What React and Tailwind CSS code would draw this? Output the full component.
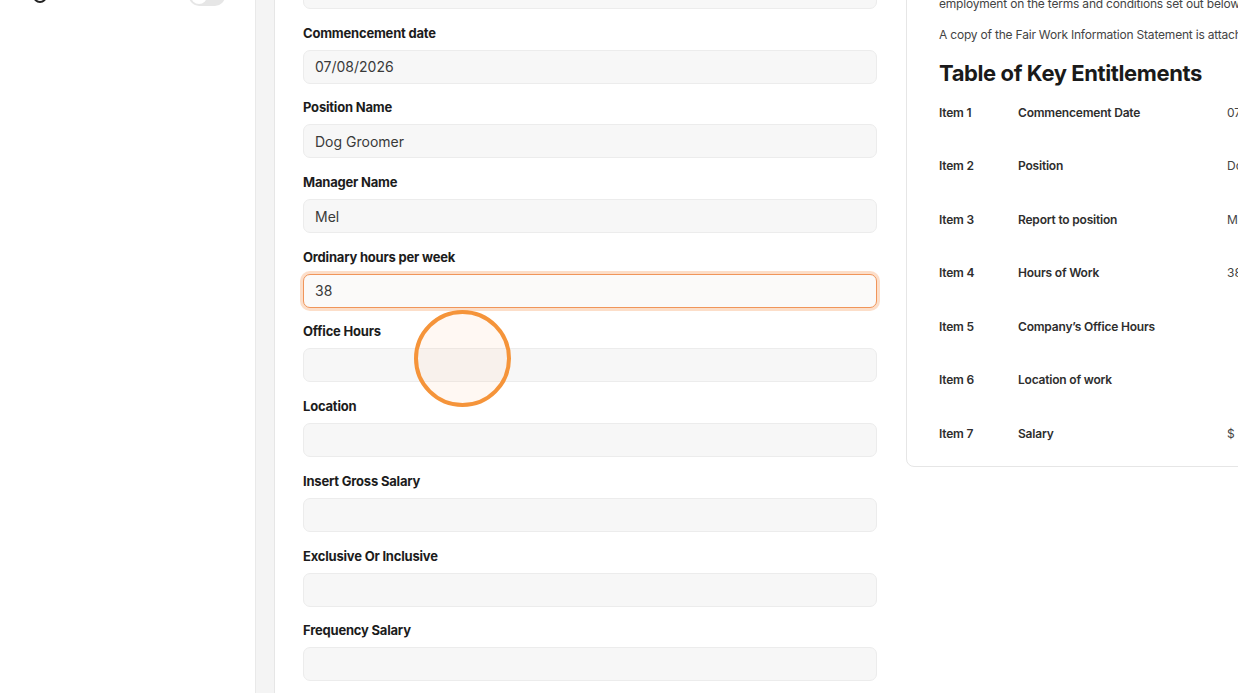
import React from 'react';

const fields = [
    { label: 'Employee Name', value: '' },
    { label: 'Commencement date', value: '07/08/2026' },
    { label: 'Position Name', value: 'Dog Groomer' },
    { label: 'Manager Name', value: 'Mel' },
    { label: 'Ordinary hours per week', value: '38', focused: true },
    { label: 'Office Hours', value: '' },
    { label: 'Location', value: '' },
    { label: 'Insert Gross Salary', value: '' },
    { label: 'Exclusive Or Inclusive', value: '' },
    { label: 'Frequency Salary', value: '' },
];

const entitlements = [
    { item: 'Item 1', name: 'Commencement Date', value: '07/08/2026' },
    { item: 'Item 2', name: 'Position', value: 'Dog Groomer' },
    { item: 'Item 3', name: 'Report to position', value: 'Mel' },
    { item: 'Item 4', name: 'Hours of Work', value: '38 hours' },
    { item: 'Item 5', name: 'Company’s Office Hours', value: '' },
    { item: 'Item 6', name: 'Location of work', value: '' },
    { item: 'Item 7', name: 'Salary', value: '$ 0.00' },
];

const Field = ({ label, value, focused }) => (
    <div>
        <label className="block text-[13px] leading-[17px] font-bold text-[#1c1c1c] tracking-[-0.2px] mb-[8px]">{label}</label>
        <input
            readOnly
            value={value}
            className={`w-full h-[34px] rounded-[7px] px-[11px] text-[14px] text-[#3a3a3a] outline-none ${focused ? 'bg-[#fbfaf9] border border-[#f0955a] shadow-[0_0_0_3px_rgba(247,160,100,0.35)]' : 'bg-[#f7f7f7] border border-[#ececec]'}`}
        />
    </div>
);

const App = () => {
    return (
        <div className="relative h-[693px] w-[1238px] overflow-hidden bg-white flex" style={{ fontFamily: 'Inter, "Noto Sans", sans-serif' }}>
            {/* sidebar, scrolled to its last setting */}
            <aside className="w-[256px] shrink-0 border-r border-[#e9e9e9] bg-white">
                <div className="-mt-[14px] flex items-center pl-[33px] pr-[30px] h-[20px]">
                    <span className="h-[14px] w-[14px] rounded-full border-2 border-[#222]" />
                    <span className="ml-[11px] text-[12px] text-[#e8e3d0]">Notifications</span>
                    <span className="ml-auto h-[20px] w-[36px] rounded-full bg-[#e6e6e6] p-[2px] flex">
                        <span className="h-[16px] w-[16px] rounded-full bg-white" />
                    </span>
                </div>
            </aside>

            <div className="w-[18px] shrink-0 bg-[#f4f4f4]" />

            <main className="flex-1 border-l border-[#e6e6e6] flex">
                <section className="w-[630px] shrink-0 pl-[28px] pr-[28px] -mt-[50px] flex flex-col gap-[15.7px]">
                    {fields.map((f) => (
                        <Field key={f.label} {...f} />
                    ))}
                </section>

                <section className="w-[420px] shrink-0 self-start -mt-[60px] ml-px border border-[#e6e6e6] rounded-lg pl-[32px] pr-[20px] pt-[10px] pb-[5px]">
                    <p className="text-[12px] leading-[18px] text-[#444] tracking-[-0.2px] whitespace-nowrap">
                        Pay Dogs Pty Ltd is pleased to offer you
                    </p>
                    <p className="text-[12px] leading-[18px] text-[#444] tracking-[-0.2px] whitespace-nowrap mt-[26px]">
                        employment on the terms and conditions set out below.
                    </p>
                    <p className="text-[12px] leading-[18px] text-[#444] tracking-[-0.2px] whitespace-nowrap mt-[13px]">
                        A copy of the Fair Work Information Statement is attached.
                    </p>
                    <h2 className="mt-[14px] text-[22px] leading-[30px] font-bold text-[#1a1a1a] tracking-[-0.4px]">Table of Key Entitlements</h2>
                    <div className="mt-[-2px]">
                        {entitlements.map((row) => (
                            <div key={row.item} className="flex items-center h-[53.5px] text-[12px] whitespace-nowrap">
                                <span className="w-[79px] shrink-0 font-semibold text-[#2e2e2e] tracking-[-0.2px]">{row.item}</span>
                                <span className="w-[209px] shrink-0 font-semibold text-[#2e2e2e] tracking-[-0.2px]">{row.name}</span>
                                <span className="text-[#444]">{row.value}</span>
                            </div>
                        ))}
                    </div>
                </section>
            </main>

            {/* click marker */}
            <div className="absolute left-[414px] top-[310px] h-[97px] w-[97px] rounded-full border-[4px] border-[#f5943a] bg-[rgba(255,200,160,0.12)] pointer-events-none" />
        </div>
    );
};

export default App;
